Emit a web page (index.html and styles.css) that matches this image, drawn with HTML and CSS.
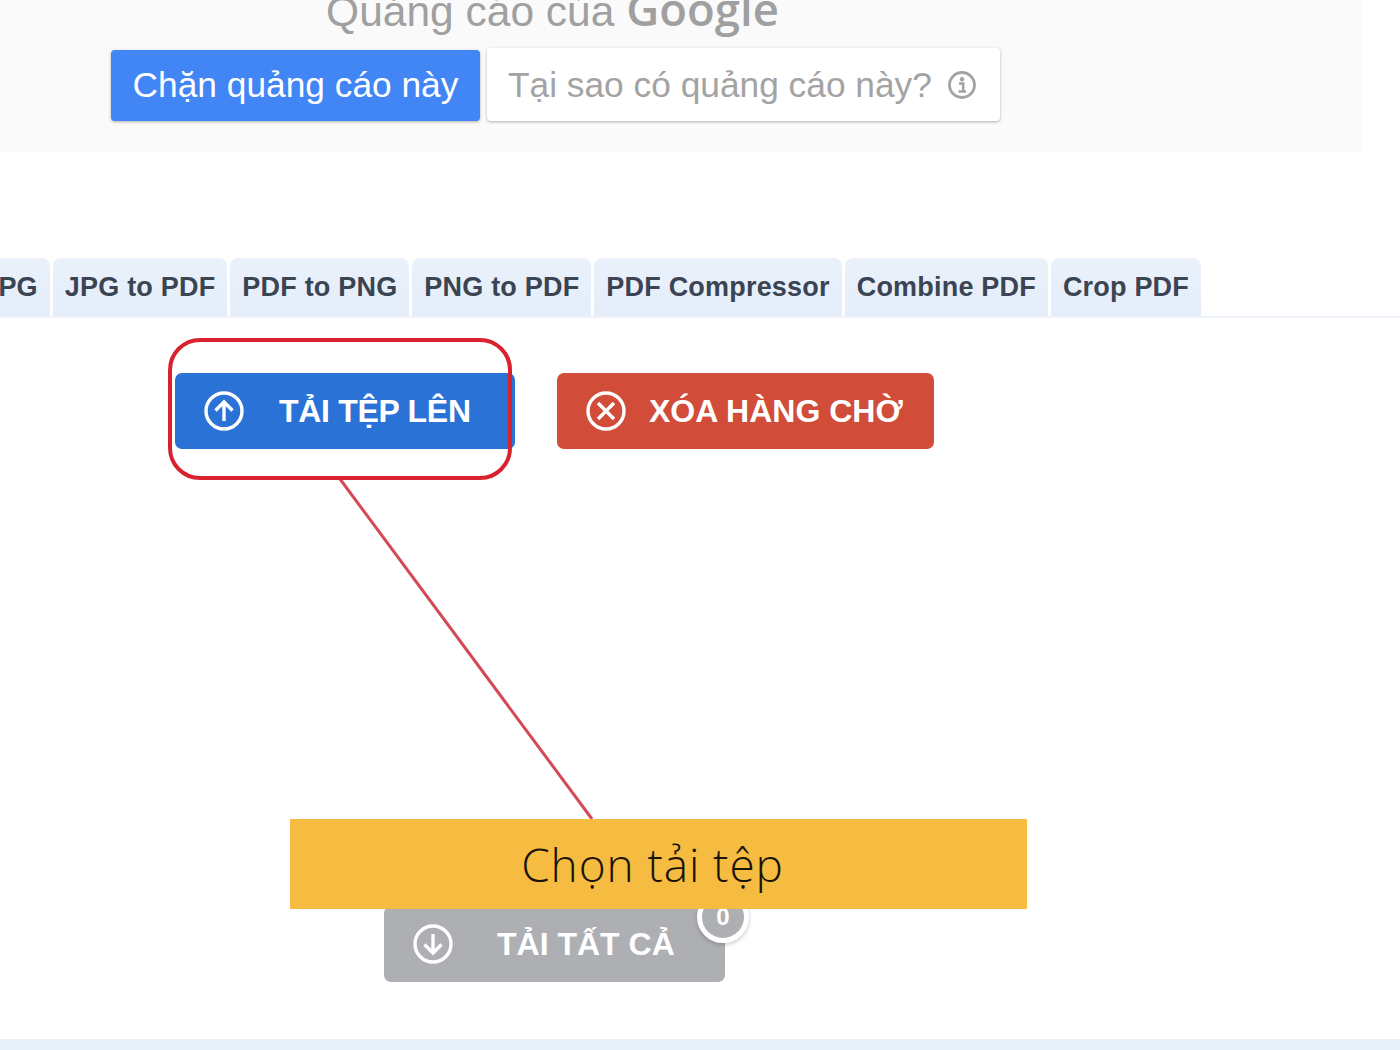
FILE: index.html
```html
<!DOCTYPE html>
<html lang="vi">

<head>
    <meta charset="UTF-8">
    <meta name="viewport" content="width=device-width, initial-scale=1.0">
    <title>Tải tệp lên</title>
    <link rel="stylesheet" href="styles.css">
</head>

<body>
    <div class="page">
        <!-- quảng cáo -->
        <div class="ad-box">
            <div class="ad-inner">
                <div class="ad-title">Quảng cáo của <span class="ad-google">Google</span></div>
                <div class="ad-buttons">
                    <a class="ad-block" href="javascript:;">Chặn quảng cáo này</a>
                    <a class="ad-why" href="javascript:;">
                        Tại sao có quảng cáo này?
                        <svg class="ad-info" viewBox="0 0 30 30">
                            <circle cx="15" cy="15" r="12.500" fill="none" stroke="#a3a3a3" stroke-width="2.800" />
                            <circle cx="15" cy="9.200" r="2.200" fill="#a3a3a3" />
                            <path d="M12 13.400h4.200v8M11.500 21.600h7.600" fill="none" stroke="#a3a3a3" stroke-width="2.500" />
                        </svg>
                    </a>
                </div>
            </div>
        </div>

        <!-- các tab -->
        <div class="tabs">
            <a class="tab" href="javascript:;">PDF to JPG</a>
            <a class="tab" href="javascript:;">JPG to PDF</a>
            <a class="tab" href="javascript:;">PDF to PNG</a>
            <a class="tab" href="javascript:;">PNG to PDF</a>
            <a class="tab" href="javascript:;">PDF Compressor</a>
            <a class="tab" href="javascript:;">Combine PDF</a>
            <a class="tab" href="javascript:;">Crop PDF</a>
        </div>

        <!-- nút chính -->
        <div class="actions">
            <a class="btn btn-upload" href="javascript:;">
                <svg class="btn-icon" viewBox="0 0 40 40">
                    <circle cx="20" cy="20" r="18" />
                    <path d="M20 30V11M11.500 19.500L20 11l8.500 8.500" />
                </svg>
                TẢI TỆP LÊN
            </a>
            <a class="btn btn-clear" href="javascript:;">
                <svg class="btn-icon" viewBox="0 0 40 40">
                    <circle cx="20" cy="20" r="18" />
                    <path d="M12 12l16 16M28 12L12 28" />
                </svg>
                XÓA HÀNG CHỜ
            </a>
        </div>

        <div class="download-row">
            <a class="btn btn-download" href="javascript:;">
                <svg class="btn-icon" viewBox="0 0 40 40">
                    <circle cx="20" cy="20" r="18" />
                    <path d="M20 10v19M11.500 20.500L20 29l8.500-8.500" />
                </svg>
                TẢI TẤT CẢ
                <span class="badge">0</span>
            </a>
        </div>

        <div class="footer-band"></div>

        <!-- chú thích -->
        <svg class="note-line" viewBox="0 0 1400 1050">
            <line x1="340" y1="479" x2="592" y2="819" />
        </svg>
        <div class="note-ring"></div>
        <div class="note-label">Chọn tải tệp</div>
    </div>
</body>

</html>
```
FILE: styles.css
```css
* {
    box-sizing: border-box;
}

html,
body {
    margin: 0;
    padding: 0;
    background: #fff;
}

a {
    text-decoration: none;
}

.page {
    position: relative;
    width: 1400px;
    height: 1050px;
    overflow: hidden;
    font-family: "Liberation Sans", Arial, sans-serif;
}

.ad-box {
    display: flex;
    flex-direction: column;
    justify-content: flex-end;
    align-items: flex-start;
    width: 1361px;
    height: 152px;
    padding: 0 0 31px 111px;
    overflow: hidden;
    background: #fafafa;
}

.ad-inner {
    display: flex;
    flex-direction: column;
    align-items: center;
}

.ad-title {
    margin-bottom: 15px;
    padding-right: 6px;
    font-size: 42.500px;
    line-height: 42px;
    color: #a0a0a0;
    white-space: nowrap;
}

.ad-google {
    font-family: "Open Sans", sans-serif;
    font-weight: 600;
    font-size: 45.500px;
    color: #a0a0a0;
}

.ad-buttons {
    display: flex;
    align-items: flex-end;
    gap: 7px;
}

.ad-block {
    display: block;
    width: 369px;
    height: 71px;
    border-radius: 4px;
    background: #4285f4;
    box-shadow: 0 1px 3px rgba(0, 0, 0, .3);
    color: #fff;
    font-size: 35.300px;
    line-height: 70px;
    text-align: center;
    white-space: nowrap;
}

.ad-why {
    display: flex;
    align-items: center;
    gap: 15px;
    width: 513px;
    height: 73px;
    padding-left: 21px;
    border-radius: 4px;
    background: #fff;
    box-shadow: 0 1px 3px rgba(0, 0, 0, .3);
    color: #a3a3a3;
    font-size: 35.300px;
    white-space: nowrap;
}

.ad-info {
    width: 30px;
    height: 30px;
}

.tabs {
    display: flex;
    justify-content: flex-end;
    gap: 3px;
    height: 60px;
    margin-top: 106px;
    padding-right: 199px;
    overflow: hidden;
    border-bottom: 2px solid #eef3f9;
}

.tab {
    flex: none;
    height: 58px;
    padding: 0 12px;
    border-radius: 8px 8px 0 0;
    background: linear-gradient(#eaf1fb, #e4edf9);
    color: #3b4452;
    font-size: 27px;
    font-weight: bold;
    letter-spacing: .2px;
    line-height: 58px;
    white-space: nowrap;
}

.actions {
    display: flex;
    gap: 42px;
    margin-top: 55px;
    padding-left: 175px;
}

.btn {
    position: relative;
    display: flex;
    align-items: center;
    height: 76px;
    padding-left: 29px;
    border-radius: 7px;
    color: #fff;
    font-size: 32px;
    font-weight: bold;
    white-space: nowrap;
}

.btn-icon {
    flex: none;
    width: 40px;
    height: 40px;
    fill: none;
    stroke: #fff;
    stroke-width: 3.400;
}

.btn-upload {
    gap: 35px;
    width: 340px;
    background: #2b72d6;
    letter-spacing: -.3px;
}

.btn-clear {
    gap: 23px;
    width: 377px;
    background: #d14d39;
}

.download-row {
    margin-top: 457px;
    padding-left: 384px;
}

.btn-download {
    gap: 44px;
    width: 341px;
    background: #adafb3;
}

.badge {
    position: absolute;
    top: -15px;
    right: -24px;
    width: 52px;
    height: 52px;
    border: 5px solid #fff;
    border-radius: 50%;
    background: #adafb3;
    box-shadow: 0 2px 4px rgba(0, 0, 0, .2);
    font-size: 24px;
    line-height: 42px;
    text-align: center;
}

.footer-band {
    height: 11px;
    margin-top: 57px;
    background: #e8f0fa;
}

/* lớp chú thích nằm đè lên trang */
.note-line {
    position: absolute;
    top: 0;
    left: 0;
    width: 1400px;
    height: 1050px;
    stroke: #d24a58;
    stroke-width: 3;
}

.note-ring {
    position: absolute;
    top: 338px;
    left: 168px;
    width: 344px;
    height: 142px;
    border: 4px solid #d8232f;
    border-radius: 32px;
}

.note-label {
    position: absolute;
    top: 819px;
    left: 290px;
    width: 737px;
    height: 90px;
    padding-right: 12px;
    background: #f5bc41;
    color: #1a1408;
    font-family: "Open Sans", sans-serif;
    font-size: 46px;
    font-weight: 300;
    letter-spacing: .9px;
    line-height: 90px;
    text-align: center;
    white-space: nowrap;
}
```
